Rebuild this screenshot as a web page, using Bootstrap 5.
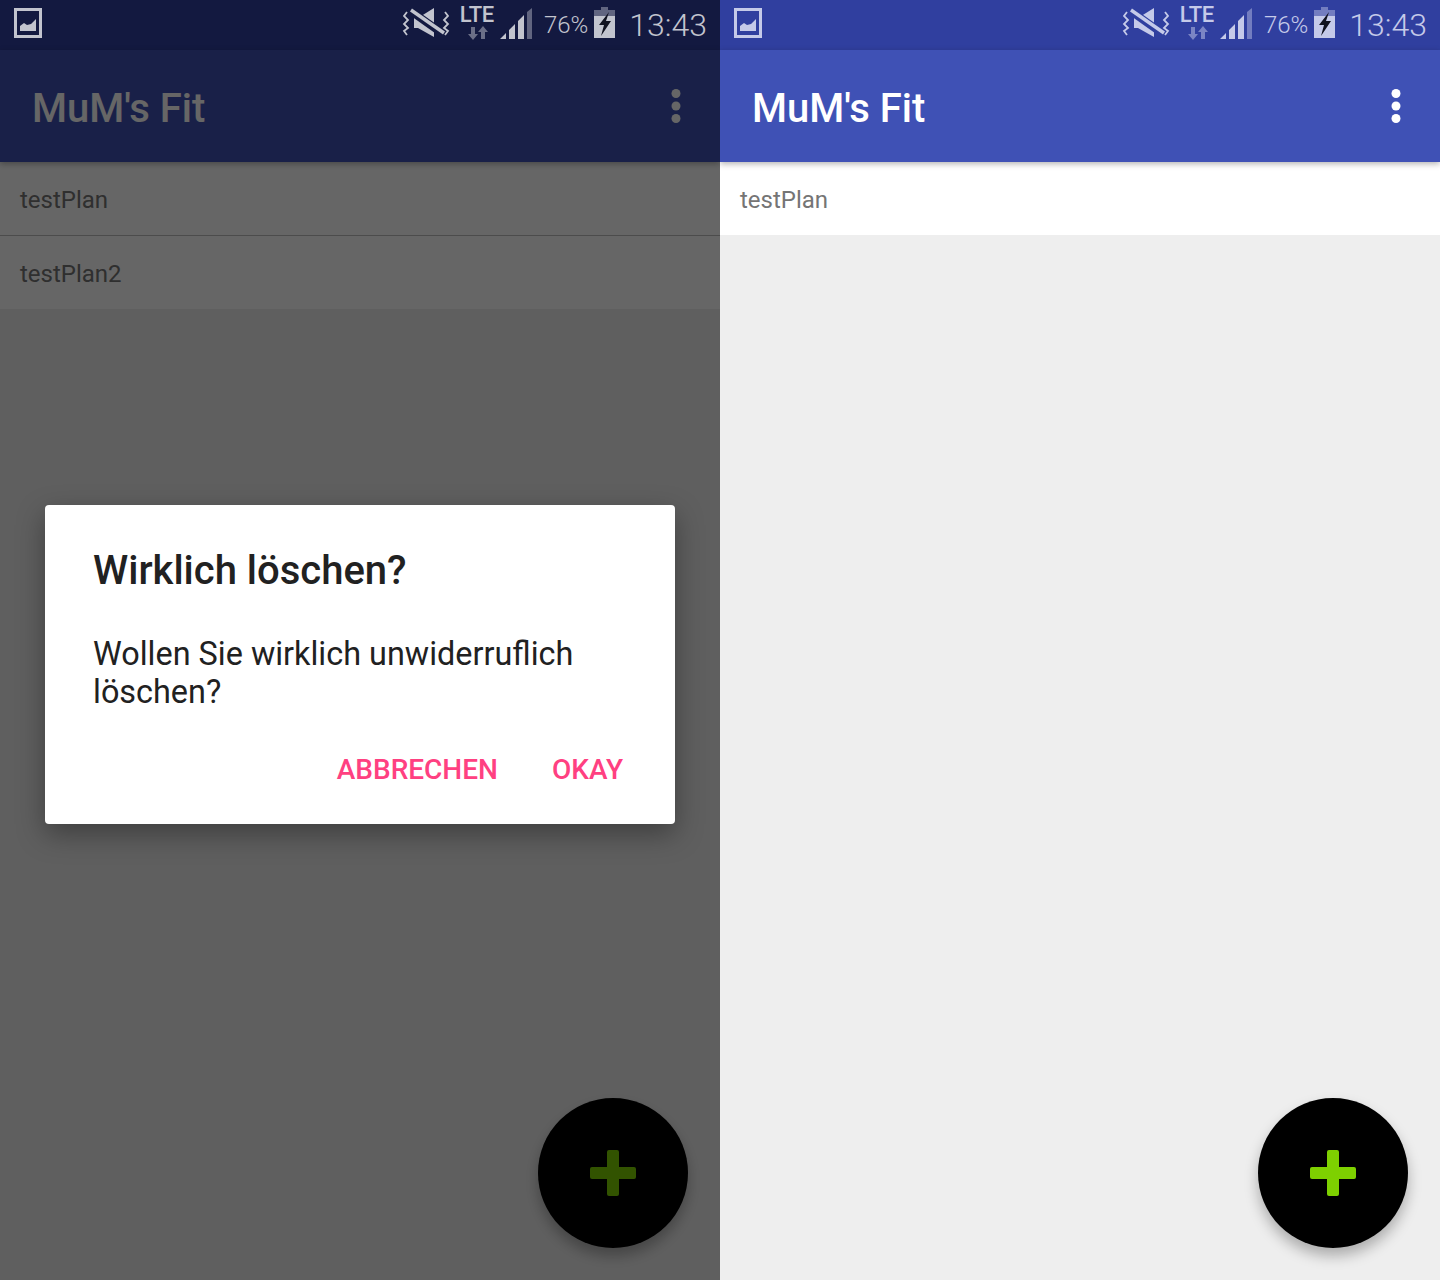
<!DOCTYPE html>
<html lang="de">
<head>
  <meta charset="UTF-8">
  <meta name="viewport" content="width=device-width, initial-scale=1.0">
  <title>MuM's Fit</title>
  <link href="https://cdn.jsdelivr.net/npm/bootstrap@5.3.2/dist/css/bootstrap.min.css" rel="stylesheet">
  <style>
    body {
      font-family: Roboto, "Liberation Sans", sans-serif;
      background-color: #000;
    }

    .phone {
      width: 720px;
      height: 1280px;
      background-color: #eeeeee;
      overflow: hidden;
    }

    .status-bar {
      --bar: #303f9f;
      height: 50px;
      background-color: var(--bar);
      color: #c5cae9;
    }

    /* the dialog dims the bar itself, not the icons on it */
    .status-dimmed {
      --bar: #131940;
      color: #c2c4ce;
    }

    .status-bar svg {
      display: block;
      flex: none;
    }

    .ico-picture { margin-left: 14px; margin-bottom: 4px; }
    .ico-mute { margin-left: auto; margin-bottom: 4px; }
    .ico-lte { width: 36px; margin-left: 9px; height: 50px; }
    .ico-signal { margin-left: 5px; margin-bottom: 2px; }
    .lte-text {
      font-size: 22px;
      font-weight: 500;
      line-height: 20px;
      padding-top: 5px;
      letter-spacing: -0.3px;
      text-align: center;
    }
    .lte-arrows { margin: 1px 0 0 9px; }
    .status-pct {
      font-size: 24px;
      font-weight: 300;
      margin-left: 12px;
      line-height: 48px;
    }
    .ico-battery { margin-left: 6px; margin-bottom: 4px; }
    .status-time {
      font-size: 32px;
      font-weight: 300;
      margin-left: 14px;
      margin-right: 13px;
      line-height: 46px;
    }

    .app-bar {
      height: 112px;
      background-color: #3f51b5;
      box-shadow: 0 2px 6px rgba(0, 0, 0, 0.3);
      padding: 6px 39px 0 32px;
    }

    .app-title {
      font-size: 40px;
      font-weight: 500;
      color: #fff;
      line-height: 1;
    }

    .app-dots {
      margin-top: -6px;
    }

    .plan-row {
      height: 73px;
      padding: 2px 0 0 20px;
      background-color: #fff;
      font-size: 24px;
      color: #757575;
    }

    .plan-sep {
      height: 1px;
      background-color: #bdbdbd;
    }

    .fab-add {
      width: 150px;
      height: 150px;
      right: 32px;
      bottom: 32px;
      background-color: #000;
      box-shadow: 0 8px 14px rgba(0, 0, 0, 0.28);
    }

    .scrim {
      top: 50px;
      bottom: 0;
      background-color: rgba(0, 0, 0, 0.6);
    }

    .confirm-box {
      width: 630px;
      height: 319px;
      margin-bottom: 1px;
      border: 0;
      border-radius: 4px;
      box-shadow: 0 10px 28px rgba(0, 0, 0, 0.35);
      padding: 42px 52px 0 48px;
      color: #212121;
    }

    .confirm-title {
      font-size: 40px;
      font-weight: 500;
      line-height: 48px;
      margin-bottom: 40px;
    }

    .confirm-text {
      font-size: 32.4px;
      line-height: 38px;
      margin-bottom: 42px;
    }

    .confirm-actions {
      column-gap: 54px;
    }

    .confirm-btn {
      font-size: 28px;
      font-weight: 500;
      line-height: 34px;
      color: #ff4081;
      padding: 0;
      border: 0;
    }
  </style>
</head>
<body>
  <svg width="0" height="0" class="d-block position-absolute">
    <defs>
      <symbol id="s-picture" viewBox="0 0 28 30">
        <path fill-rule="evenodd" fill="currentColor" d="M0 0h28v30H0zM3 3v24h22V3z"/>
        <path fill="currentColor" d="M6 23v-5l4-3 3 2 4-1 5-5v12z"/>
      </symbol>
      <symbol id="s-mute" viewBox="0 0 48 30">
        <path fill="currentColor" d="M12 10h4L32 0v29L16 20h-4z"/>
        <path fill="none" stroke="var(--bar)" stroke-width="8" d="M6 1 44 28"/>
        <path fill="none" stroke="currentColor" stroke-width="3.4" d="M9 2 42 25"/>
        <path fill="none" stroke="currentColor" stroke-width="1.8" d="M5 4 2 8l4 4-4 4 4 4-4 3 3 4M43 4l3 4-4 4 4 4-4 4 4 3-3 4"/>
      </symbol>
      <symbol id="s-arrows" viewBox="0 0 20 14">
        <path fill="currentColor" d="M5 14 0 8h3V1h4v7h3zM15 0l5 6h-3v7h-4V6h-3z"/>
      </symbol>
      <symbol id="s-signal" viewBox="0 0 32 32">
        <path fill="currentColor" d="M0 31 6 25v6zM9 31V22l6-6v15zM18 31V13l6-6v24z"/>
        <path fill="currentColor" opacity=".45" d="M27 31V4l5-4v31z"/>
      </symbol>
      <symbol id="s-battery" viewBox="0 0 21 32">
        <path fill="currentColor" opacity=".45" d="M7 0h7v3h7v6H0V3h7z"/>
        <path fill="currentColor" d="M0 9h21v22H0z"/>
        <path fill="#10121f" d="M15 5 5 18h5L7 29l10-15h-5l3-9z"/>
      </symbol>
    </defs>
  </svg>

  <div class="d-flex">
    <!-- Links: mit Dialog -->
    <div class="phone position-relative d-flex flex-column">
      <div class="status-bar status-dimmed d-flex align-items-center flex-shrink-0">
        <svg class="ico-picture" width="28" height="30"><use href="#s-picture"/></svg>
        <svg class="ico-mute" width="48" height="30"><use href="#s-mute"/></svg>
        <div class="ico-lte">
          <div class="lte-text">LTE</div>
          <svg class="lte-arrows opacity-50" width="20" height="14"><use href="#s-arrows"/></svg>
        </div>
        <svg class="ico-signal" width="32" height="32"><use href="#s-signal"/></svg>
        <span class="status-pct">76%</span>
        <svg class="ico-battery" width="21" height="32"><use href="#s-battery"/></svg>
        <span class="status-time">13:43</span>
      </div>
      <div class="app-bar d-flex align-items-center justify-content-between position-relative flex-shrink-0">
        <span class="app-title">MuM's Fit</span>
        <svg class="app-dots" width="10" height="34" fill="#fff"><circle cx="5" cy="4.5" r="4.5"/><circle cx="5" cy="17" r="4.5"/><circle cx="5" cy="29.5" r="4.5"/></svg>
      </div>
      <div class="plan-row d-flex align-items-center">testPlan</div>
      <div class="plan-sep"></div>
      <div class="plan-row d-flex align-items-center">testPlan2</div>
      <div class="fab-add position-absolute rounded-circle d-flex align-items-center justify-content-center">
        <svg width="46" height="46" fill="#7ed000"><rect x="17" width="12" height="46" rx="2"/><rect y="17" width="46" height="12" rx="2"/></svg>
      </div>
      <div class="scrim position-absolute start-0 w-100 d-flex align-items-center justify-content-center">
        <div class="confirm-box card bg-white">
          <div class="confirm-title">Wirklich löschen?</div>
          <div class="confirm-text">Wollen Sie wirklich unwiderruflich löschen?</div>
          <div class="confirm-actions d-flex justify-content-end">
            <button type="button" class="btn confirm-btn">ABBRECHEN</button>
            <button type="button" class="btn confirm-btn">OKAY</button>
          </div>
        </div>
      </div>
    </div>

    <!-- Rechts: Liste -->
    <div class="phone position-relative d-flex flex-column">
      <div class="status-bar d-flex align-items-center flex-shrink-0">
        <svg class="ico-picture" width="28" height="30"><use href="#s-picture"/></svg>
        <svg class="ico-mute" width="48" height="30"><use href="#s-mute"/></svg>
        <div class="ico-lte">
          <div class="lte-text">LTE</div>
          <svg class="lte-arrows opacity-50" width="20" height="14"><use href="#s-arrows"/></svg>
        </div>
        <svg class="ico-signal" width="32" height="32"><use href="#s-signal"/></svg>
        <span class="status-pct">76%</span>
        <svg class="ico-battery" width="21" height="32"><use href="#s-battery"/></svg>
        <span class="status-time">13:43</span>
      </div>
      <div class="app-bar d-flex align-items-center justify-content-between position-relative flex-shrink-0">
        <span class="app-title">MuM's Fit</span>
        <svg class="app-dots" width="10" height="34" fill="#fff"><circle cx="5" cy="4.5" r="4.5"/><circle cx="5" cy="17" r="4.5"/><circle cx="5" cy="29.5" r="4.5"/></svg>
      </div>
      <div class="plan-row d-flex align-items-center">testPlan</div>
      <div class="fab-add position-absolute rounded-circle d-flex align-items-center justify-content-center">
        <svg width="46" height="46" fill="#7ed000"><rect x="17" width="12" height="46" rx="2"/><rect y="17" width="46" height="12" rx="2"/></svg>
      </div>
    </div>
  </div>

  <script src="https://cdn.jsdelivr.net/npm/bootstrap@5.3.2/dist/js/bootstrap.bundle.min.js"></script>
</body>
</html>
